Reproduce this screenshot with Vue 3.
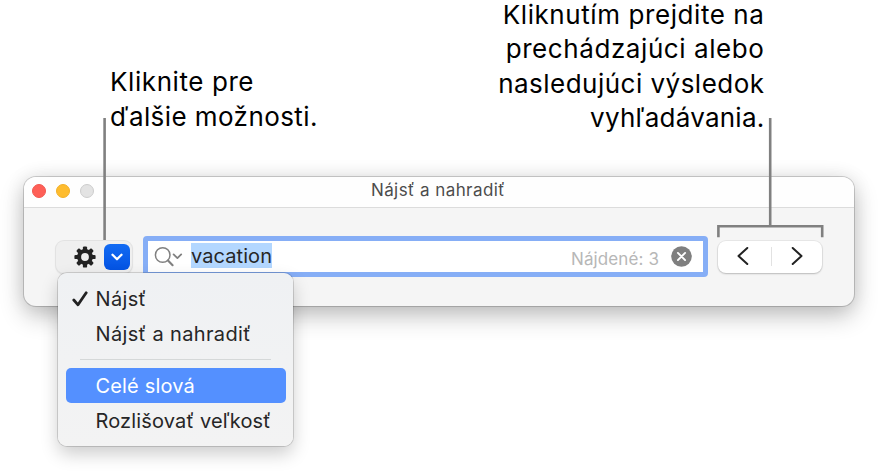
<template>
    <div class="page">
        <!-- popisky -->
        <div class="callouts">
            <p class="callout left">
                <span class="l1">Kliknite pre</span>
                <span class="l2">ďalšie možnosti.</span>
            </p>
            <p class="callout right">
                <span class="r1">Kliknutím prejdite na</span>
                <span class="r2">prechádzajúci alebo</span>
                <span class="r3">nasledujúci výsledok</span>
                <span class="r4">vyhľadávania.</span>
            </p>
        </div>

        <!-- okno -->
        <div class="window">
            <div class="titlebar">
                <div class="lights">
                    <i class="light red"></i>
                    <i class="light yellow"></i>
                    <i class="light gray"></i>
                </div>
                <span class="title">Nájsť a nahradiť</span>
            </div>
            <div class="toolbar">
                <button class="gearBtn" @click="toggleMenu">
                    <svg class="gear" width="22" height="22" viewBox="-11 -11 22 22">
                        <rect v-for="n in 8" :key="n" x="-2.1" y="-10.6" width="4.2" height="5" rx="1.2" fill="#232323" :transform="`rotate(${n * 45})`" />
                        <circle r="5.9" fill="none" stroke="#232323" stroke-width="4" />
                    </svg>
                    <span class="drop">
                        <svg width="12" height="8" viewBox="0 0 12 8"><path d="M1.5 1.8 L6 6.2 L10.5 1.8" fill="none" stroke="#fff" stroke-width="2.3" stroke-linecap="round" stroke-linejoin="round" /></svg>
                    </span>
                </button>

                <div class="field">
                    <svg class="search" width="30" height="22" viewBox="0 0 30 22">
                        <g fill="none" stroke="#808080" stroke-linecap="round" stroke-linejoin="round">
                            <circle cx="8.7" cy="9" r="7.3" stroke-width="1.5" />
                            <path d="M14 14.4 L18.6 19.2" stroke-width="2.1" />
                            <path d="M19.6 8.4 L23.4 12.1 L27.2 8.4" stroke-width="1.8" />
                        </g>
                    </svg>
                    <span class="query">{{ query }}</span>
                    <span class="found">Nájdené: {{ found }}</span>
                    <svg class="clear" width="21" height="21" viewBox="0 0 21 21" @click="clearQuery">
                        <circle cx="10.5" cy="10.5" r="10.3" fill="#7f7f7f" />
                        <path d="M6.9 6.9 L14.1 14.1 M14.1 6.9 L6.9 14.1" stroke="#fff" stroke-width="1.9" stroke-linecap="round" />
                    </svg>
                </div>

                <div class="navBtns">
                    <button class="navBtn prev">
                        <svg width="12" height="18" viewBox="0 0 12 18"><path d="M10.3 1 L1.5 9 L10.3 17" /></svg>
                    </button>
                    <i class="divider"></i>
                    <button class="navBtn next">
                        <svg width="12" height="18" viewBox="0 0 12 18"><path d="M1.7 1 L10.5 9 L1.7 17" /></svg>
                    </button>
                </div>
            </div>
        </div>

        <!-- čiary k popiskom -->
        <svg class="lines" width="880" height="473" viewBox="0 0 880 473">
            <g fill="none" stroke="#808080" stroke-width="2.6">
                <path d="M104.6 118 V240" />
                <path d="M770.2 118 V226" />
                <path d="M718.4 237.3 V226.2 H822.2 V237.3" />
            </g>
        </svg>

        <!-- menu -->
        <div class="menu" v-show="menuOpen">
            <template v-for="item in items" :key="item.label">
                <div v-if="item.separator" class="separator"></div>
                <div class="item" :class="{ active: item.active }">
                    <svg v-if="item.checked" class="check" width="16" height="16" viewBox="0 0 16 16"><path d="M1.8 9 L6 13.8 L14.2 1.8" fill="none" stroke="#222" stroke-width="2.8" stroke-linecap="round" stroke-linejoin="round" /></svg>
                    <span class="label" :class="item.cls">{{ item.label }}</span>
                </div>
            </template>
        </div>
    </div>
</template>

<script setup>
    import {ref} from "vue"

    let query = ref("vacation")
    let found = ref(3)
    let menuOpen = ref(true)

    let items = ref([
        {label: "Nájsť", checked: true, cls: "m1"},
        {label: "Nájsť a nahradiť", cls: "m2"},
        {label: "Celé slová", active: true, separator: true, cls: "m3"},
        {label: "Rozlišovať veľkosť", cls: "m4"},
    ])

    function toggleMenu() {
        menuOpen.value = !menuOpen.value
    }
    function clearQuery() {
        query.value = ""
        found.value = 0
    }
</script>

<style>
body {
    margin: 0;
    background: #fff;
}
</style>

<style scoped>
.page {
    position: relative;
    width: 880px;
    height: 473px;
    overflow: hidden;
    background: #fff;
    font-family: Inter, "Liberation Sans", sans-serif;
}
button {
    padding: 0;
    border: 0;
    font: inherit;
}

/* ***************popisky*************** */
.callouts {
    display: flex;
    justify-content: space-between;
    height: 177px;
    box-sizing: border-box;
    padding: 0 115.5px 0 110px;
}
.callout {
    display: flex;
    flex-direction: column;
    margin: 0;
    font-size: 26px;
    line-height: 34.5px;
    color: #000;
    white-space: nowrap;
}
.left {
    padding-top: 65px;
}
.right {
    margin-top: -2.5px;
    align-items: flex-end;
}
.l1,
.r1,
.r2 {
    letter-spacing: .58px;
}
.l2 {
    letter-spacing: .42px;
}
.r3 {
    letter-spacing: .48px;
}
.r4 {
    letter-spacing: .25px;
}

/* ***************okno*************** */
.window {
    width: 830px;
    height: 129px;
    margin-left: 24px;
    border-radius: 12px;
    background: #f5f5f5;
    box-shadow: 0 0 0 1px rgba(0, 0, 0, .17), 0 10px 24px rgba(0, 0, 0, .24), 0 0 20px rgba(0, 0, 0, .09);
}
.titlebar {
    display: flex;
    align-items: center;
    height: 30px;
    border-bottom: 1px solid #dcdcdc;
    border-radius: 12px 12px 0 0;
    background: #fefefe;
}
.lights {
    display: flex;
    gap: 10px;
    width: 100px;
    padding: 0 0 2px 8px;
}
.light {
    width: 14px;
    height: 14px;
    box-sizing: border-box;
    border-radius: 50%;
}
.red {
    background: #fe5f57;
    border: 1px solid #f2574f;
}
.yellow {
    background: #febc2e;
    border: 1px solid #f2b028;
}
.gray {
    background: #e3e3e3;
    border: 1px solid #cdcdcd;
}
.title {
    flex: 1;
    margin-right: 110px;
    padding-bottom: 4px;
    text-align: center;
    font-size: 17px;
    letter-spacing: .42px;
    color: #4c4c4c;
}

/* ***************panel*************** */
.toolbar {
    display: flex;
    align-items: flex-start;
    height: 98px;
    box-sizing: border-box;
    padding: 28px 0 0 32px;
}
.gearBtn {
    display: flex;
    align-items: center;
    justify-content: flex-end;
    width: 76px;
    height: 32px;
    box-sizing: border-box;
    margin-top: 5px;
    padding: 0 2.5px 0 0;
    border-radius: 8px;
    background: #efefef;
    box-shadow: 0 0 0 1px #e2e2e2, 0 1px 2px rgba(0, 0, 0, .2);
}
.drop {
    display: flex;
    align-items: center;
    justify-content: center;
    width: 26px;
    height: 26px;
    margin-left: 8px;
    border-radius: 6px;
    background: linear-gradient(#126bf3, #0453e3);
}
.field {
    display: flex;
    align-items: center;
    width: 565px;
    height: 41px;
    box-sizing: border-box;
    margin-left: 11px;
    padding: 0 11px 0 6px;
    border: 5px solid #86aef6;
    border-radius: 4px;
    background: #fff;
}
.search {
    margin-top: 1px;
}
.query {
    height: 25px;
    margin: -3px 0 0 7px;
    line-height: 26px;
    font-size: 20px;
    letter-spacing: .08px;
    background: #b3d7ff;
    color: #262626;
}
.found {
    margin: 5px 12px 0 auto;
    font-size: 17px;
    letter-spacing: .1px;
    color: #b7b7b7;
}
.navBtns {
    display: flex;
    align-items: center;
    width: 104px;
    height: 32px;
    margin: 4.5px 0 0 10px;
    border-radius: 8px;
    background: #fff;
    box-shadow: 0 0 0 1px rgba(0, 0, 0, .05), 0 1px 2px rgba(0, 0, 0, .2);
}
.navBtn {
    display: flex;
    flex: 1;
    justify-content: center;
    background: none;
}
.prev {
    padding: 0 3px 1px 0;
}
.next {
    padding: 0 0 1px 1px;
}
.navBtn path {
    fill: none;
    stroke: #222;
    stroke-width: 2;
    stroke-linecap: round;
    stroke-linejoin: round;
}
.divider {
    width: 1px;
    height: 19px;
    background: #e2e2e2;
}

/* ***************čiary*************** */
.lines {
    position: absolute;
    left: 0;
    top: 0;
    pointer-events: none;
}

/* ***************menu*************** */
.menu {
    position: absolute;
    left: 58px;
    top: 273px;
    width: 235px;
    height: 173px;
    box-sizing: border-box;
    padding: 8px 7.5px;
    border-radius: 9px;
    background: linear-gradient(#eff1f3, #f3f3f3);
    box-shadow: 0 0 0 1px rgba(0, 0, 0, .14), 0 8px 18px rgba(0, 0, 0, .2);
}
.item {
    display: flex;
    align-items: center;
    height: 35px;
    padding-left: 30px;
    border-radius: 5px;
    font-size: 20px;
    color: #262626;
    white-space: nowrap;
}
.active {
    background: #5490ff;
    color: #fff;
}
.check {
    margin: 0 8px 0 -24px;
}
.m1,
.m2 {
    letter-spacing: .35px;
}
.m3,
.m4 {
    letter-spacing: .16px;
}
.separator {
    height: 1px;
    margin: 8px 14.5px;
    background: #d5d8d8;
}
</style>
